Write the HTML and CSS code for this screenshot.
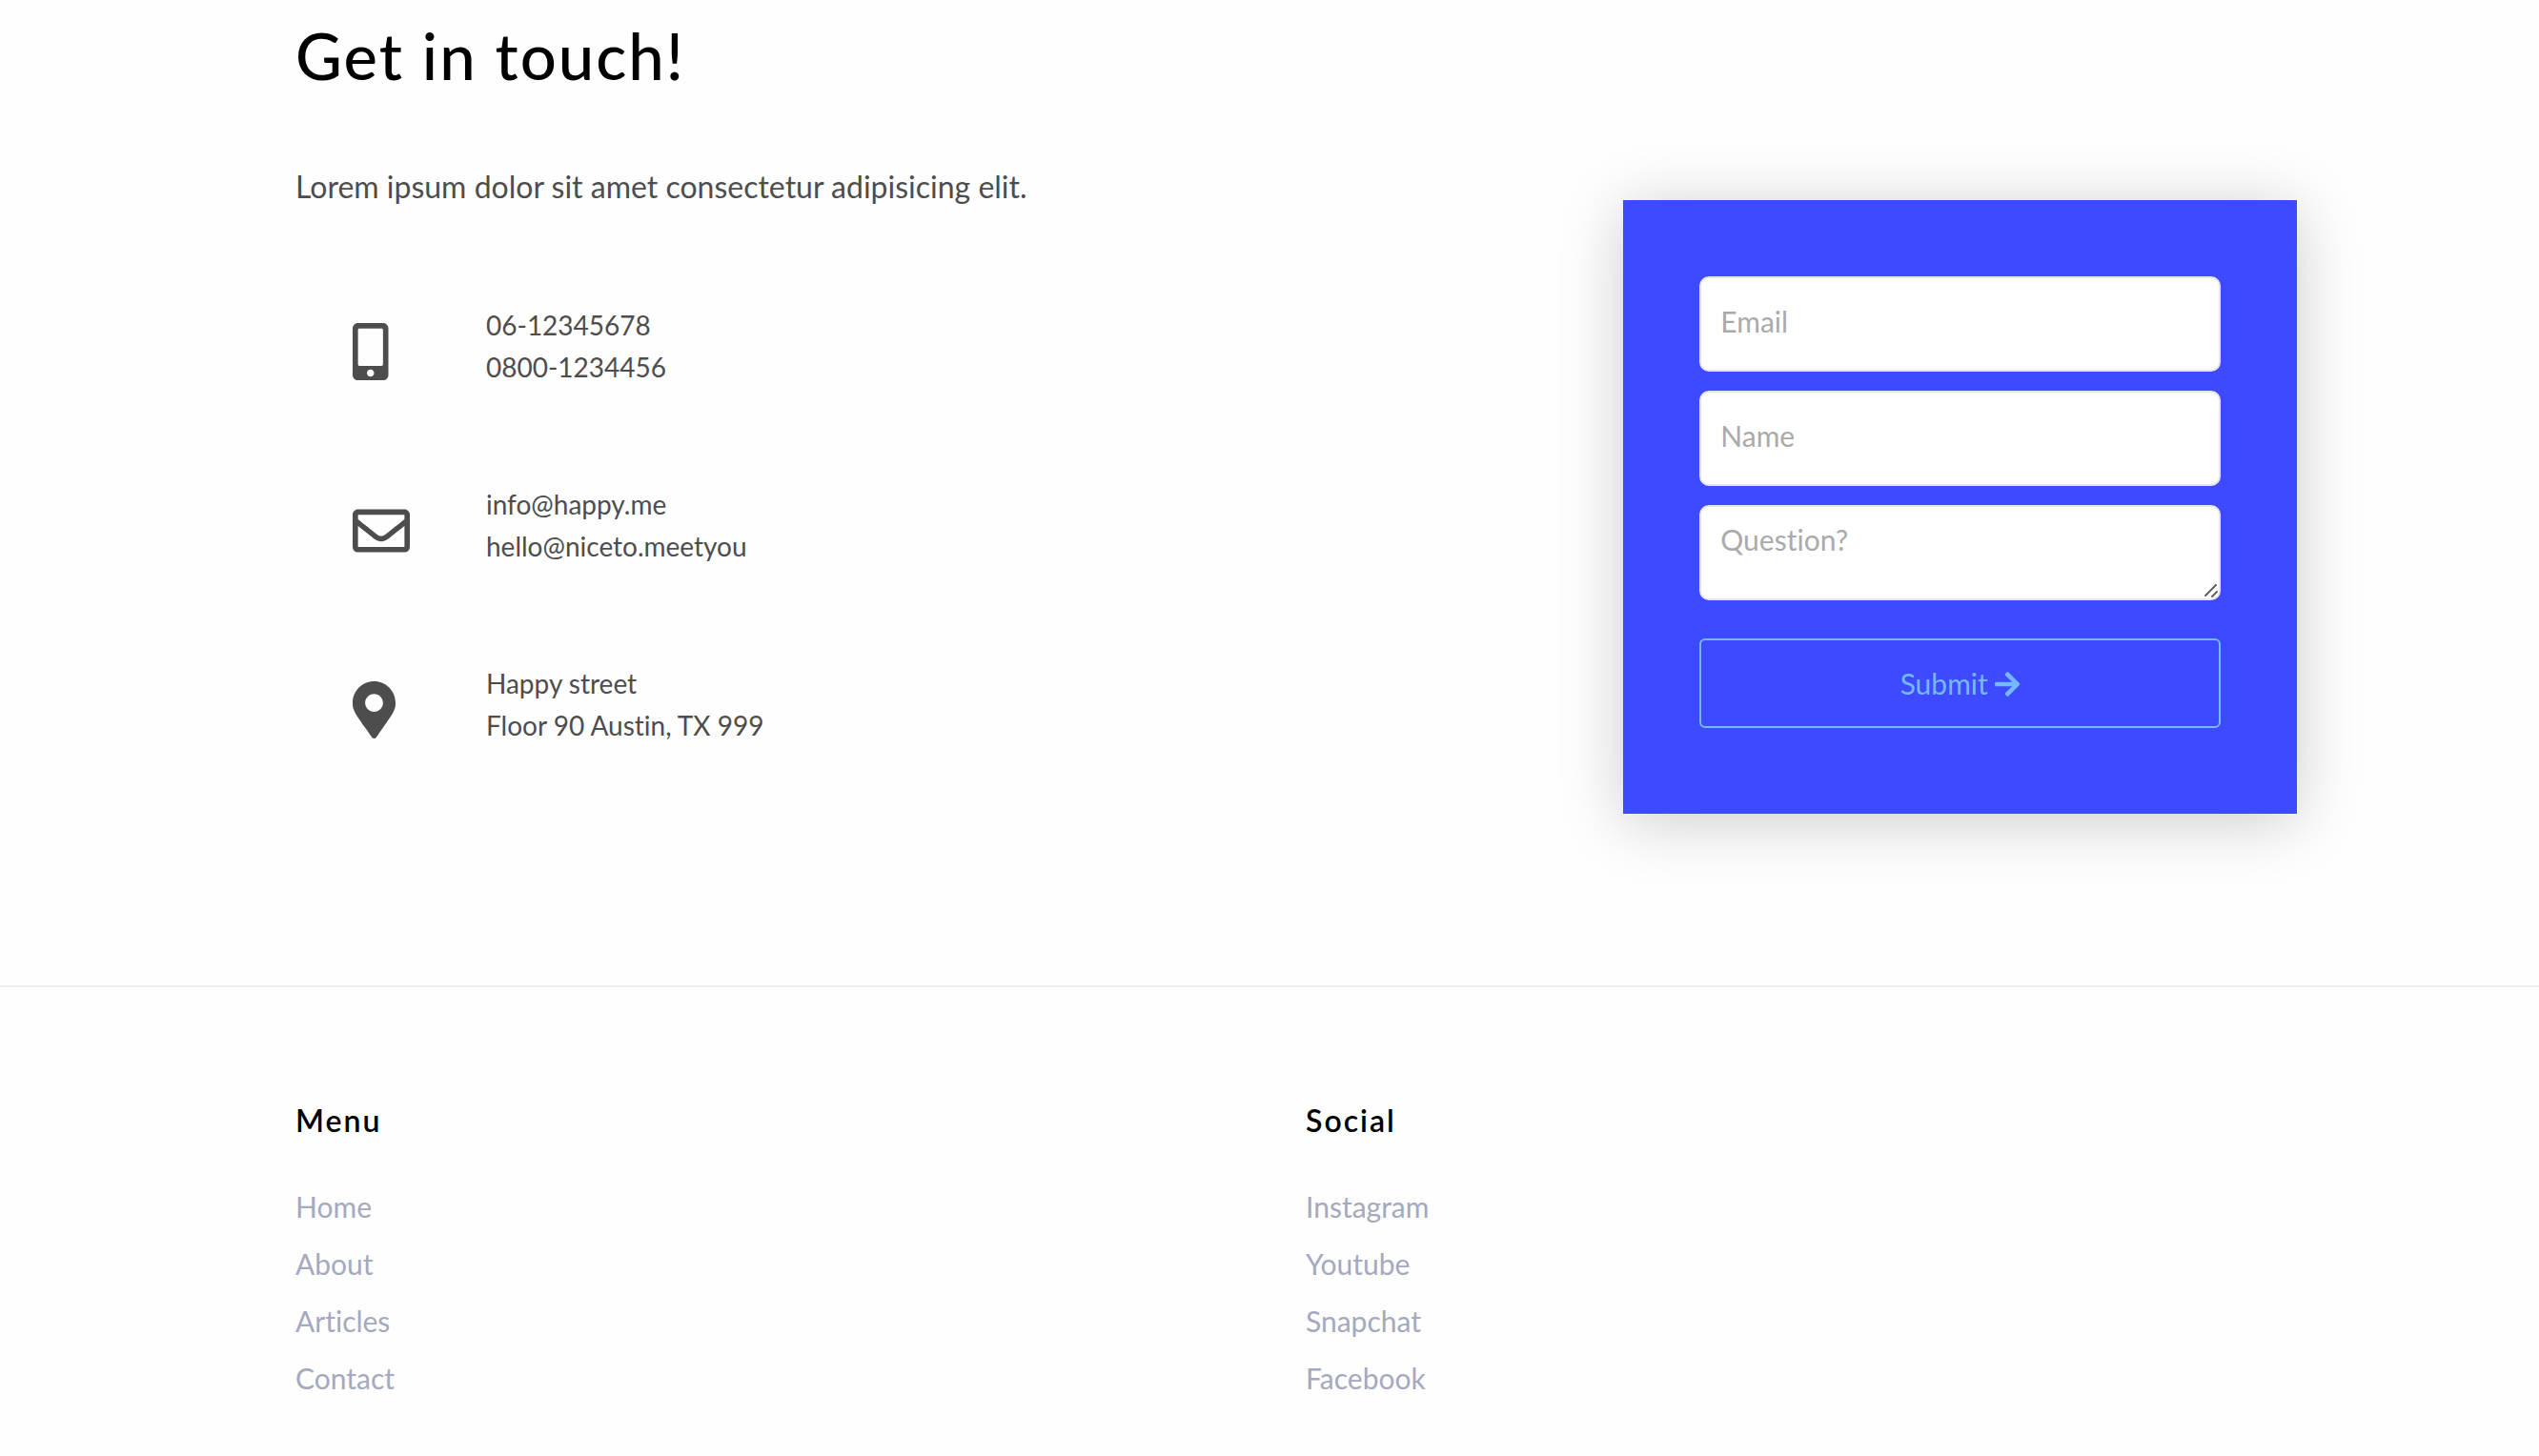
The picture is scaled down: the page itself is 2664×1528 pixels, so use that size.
FILE: index.html
```html
<!DOCTYPE html>
<html lang="en">
<head>
<meta charset="utf-8">
<meta name="viewport" content="width=device-width, initial-scale=1">
<title>Get in touch</title>
<link rel="stylesheet" href="styles.css">
</head>
<body>
<main class="contact">
  <section class="contact-info">
    <h1 class="title">Get in touch!</h1>
    <p class="lead">Lorem ipsum dolor sit amet consectetur adipisicing elit.</p>
    <ul class="contact-list">
      <li class="contact-item">
        <span class="contact-icon"><svg viewBox="0 0 320 512" aria-hidden="true"><path d="M272 0H48C21.5 0 0 21.5 0 48v416c0 26.5 21.5 48 48 48h224c26.5 0 48-21.5 48-48V48c0-26.5-21.5-48-48-48zM160 480c-17.700 0-32-14.300-32-32s14.300-32 32-32 32 14.300 32 32-14.300 32-32 32zm112-108c0 6.600-5.400 12-12 12H60c-6.600 0-12-5.400-12-12V60c0-6.600 5.400-12 12-12h200c6.600 0 12 5.400 12 12v312z"/></svg></span>
        <p class="contact-text">06-12345678<br>0800-1234456</p>
      </li>
      <li class="contact-item">
        <span class="contact-icon"><svg viewBox="0 0 512 512" aria-hidden="true"><path d="M464 64H48C21.490 64 0 85.490 0 112v288c0 26.510 21.490 48 48 48h416c26.510 0 48-21.490 48-48V112c0-26.510-21.490-48-48-48zm0 48v40.805c-22.422 18.259-58.168 46.651-134.587 106.490-16.841 13.247-50.201 45.072-73.413 44.701-23.208.375-56.579-31.459-73.413-44.701C106.180 199.465 70.425 171.067 48 152.805V112h416zM48 400V214.398c22.914 18.251 55.409 43.862 104.938 82.646 21.857 17.205 60.134 55.186 103.062 54.955 42.717.231 80.509-37.199 103.053-54.947 49.528-38.783 82.032-64.401 104.947-82.653V400H48z"/></svg></span>
        <p class="contact-text">info@happy.me<br>hello@niceto.meetyou</p>
      </li>
      <li class="contact-item">
        <span class="contact-icon"><svg viewBox="0 0 384 512" aria-hidden="true"><path d="M172.268 501.670C26.970 291.031 0 269.413 0 192 0 85.961 85.961 0 192 0s192 85.961 192 192c0 77.413-26.970 99.031-172.268 309.670-9.535 13.774-29.930 13.773-39.464 0zM192 272c44.183 0 80-35.817 80-80s-35.817-80-80-80-80 35.817-80 80 35.817 80 80 80z"/></svg></span>
        <p class="contact-text">Happy street<br>Floor 90 Austin, TX 999</p>
      </li>
    </ul>
  </section>
  <form class="contact-form">
    <input class="field" type="email" placeholder="Email" aria-label="Email">
    <input class="field" type="text" placeholder="Name" aria-label="Name">
    <textarea class="field field-area" placeholder="Question?" aria-label="Question"></textarea>
    <button class="submit" type="submit">Submit <svg class="submit-icon" viewBox="0 0 448 512" aria-hidden="true"><path d="M190.500 66.900l22.200-22.200c9.400-9.400 24.600-9.400 33.900 0L441 239c9.400 9.400 9.400 24.600 0 33.900L246.600 467.300c-9.400 9.400-24.600 9.400-33.900 0l-22.200-22.200c-9.500-9.500-9.300-25 .4-34.300L311.400 296H24c-13.300 0-24-10.700-24-24v-32c0-13.300 10.700-24 24-24h287.400L190.900 101.200c-9.800-9.300-10-24.800-.4-34.300z"/></svg></button>
  </form>
</main>
<footer class="footer">
  <nav class="footer-column" aria-labelledby="menu-title">
    <h2 class="footer-title" id="menu-title">Menu</h2>
    <ul class="footer-links">
      <li><a href="#home">Home</a></li>
      <li><a href="#about">About</a></li>
      <li><a href="#articles">Articles</a></li>
      <li><a href="#contact">Contact</a></li>
    </ul>
  </nav>
  <nav class="footer-column" aria-labelledby="social-title">
    <h2 class="footer-title" id="social-title">Social</h2>
    <ul class="footer-links">
      <li><a href="#instagram">Instagram</a></li>
      <li><a href="#youtube">Youtube</a></li>
      <li><a href="#snapchat">Snapchat</a></li>
      <li><a href="#facebook">Facebook</a></li>
    </ul>
  </nav>
</footer>
</body>
</html>
```
FILE: styles.css
```css
* {
  box-sizing: border-box;
}

body {
  margin: 0;
  background: #fefefe;
  color: #4d4d4d;
  font-family: Lato, "Liberation Sans", sans-serif;
  font-variant-ligatures: none;
}

h1,
h2,
p,
ul {
  margin: 0;
  padding: 0;
}

ul {
  list-style: none;
}

.contact,
.footer {
  display: grid;
  padding-left: 290px;
  padding-right: 254px;
}

.contact {
  grid-template-columns: 2fr 1fr;
  align-items: start;
  padding-top: 18px;
  padding-bottom: 180px;
}

.contact-info {
  padding: 0 20px;
}

.title {
  color: #000;
  font-size: 67px;
  font-weight: 500;
  line-height: 80px;
  letter-spacing: 2px;
}

.lead {
  margin-top: 74px;
  font-size: 32px;
  line-height: 48px;
}

.contact-list {
  display: grid;
  gap: 100px;
  margin-top: 99px;
  padding-left: 60px;
}

.contact-item {
  display: grid;
  grid-template-columns: 140px 1fr;
}

.contact-icon {
  height: 60px;
  margin-top: 20px;
}

.contact-icon svg {
  display: block;
  height: 100%;
  fill: #4d4d4d;
}

.contact-text {
  font-size: 28px;
  line-height: 44px;
}

.contact-form {
  display: flex;
  flex-direction: column;
  gap: 20px;
  margin-top: 192px;
  padding: 80px 80px 90px;
  background: #3e4aff;
  box-shadow: 0 8px 64px rgba(0, 0, 0, 0.2);
}

.field {
  display: block;
  width: 100%;
  height: 100px;
  margin: 0;
  padding: 0 20px 6px;
  border: 2px solid #e6e6e6;
  border-radius: 10px;
  outline: 0;
  background: #fff;
  color: #4d4d4d;
  font: inherit;
  font-size: 30px;
  font-variant-ligatures: none;
  line-height: 36px;
}

.field::placeholder {
  color: #aaa;
  opacity: 1;
}

.field-area {
  padding-top: 16px;
  resize: vertical;
}

.field-area::-webkit-resizer {
  background: url("data:image/svg+xml,%3Csvg xmlns='http://www.w3.org/2000/svg' width='15' height='15' viewBox='0 0 15 15'%3E%3Cpath d='M1 12L12 1M8 13L13 8' stroke='%23606060' stroke-width='2' stroke-linecap='round'/%3E%3C/svg%3E") no-repeat;
}

.submit {
  height: 94px;
  margin-top: 20px;
  border: 2px solid #74b9ff;
  border-radius: 6px;
  background: transparent;
  color: #74b9ff;
  font: inherit;
  font-size: 30px;
  line-height: 36px;
  cursor: pointer;
}

.submit-icon {
  height: 30px;
  fill: currentColor;
  vertical-align: -4px;
}

.footer {
  grid-template-columns: 1fr 1fr;
  padding-top: 116px;
  padding-bottom: 52px;
  border-top: 2px solid #eee;
}

.footer-column {
  padding: 0 20px;
}

.footer-title {
  color: #000;
  font-size: 32px;
  font-weight: 600;
  line-height: 48px;
  letter-spacing: 2px;
}

.footer-links {
  margin-top: 36px;
  font-size: 30px;
  line-height: 60px;
}

.footer-links a {
  color: #a4a9be;
  text-decoration: none;
}
```
